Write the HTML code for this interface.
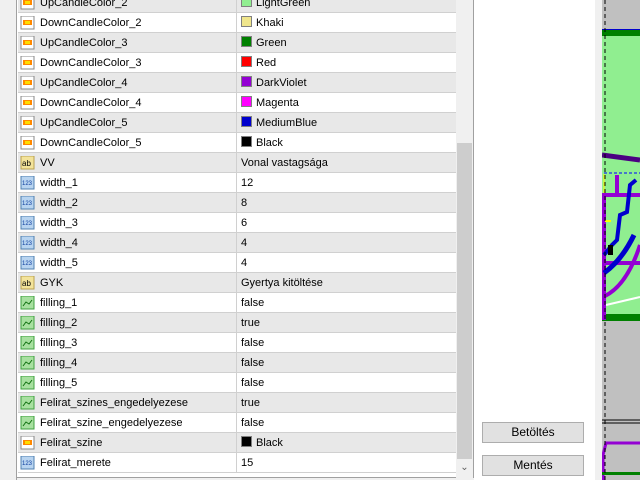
<!DOCTYPE html>
<html><head><meta charset="utf-8"><style>
*{margin:0;padding:0;box-sizing:border-box}
body{width:640px;height:480px;overflow:hidden;background:#f0f0f0;font-family:"Liberation Sans",sans-serif;font-size:11px;color:#000;position:relative}
#left{position:absolute;left:0;top:0;width:17px;height:480px;background:#f0f0f0;border-right:1px solid #a0a0a0}
#grid{position:absolute;left:17px;top:0;width:457px;height:478px;background:#fff;border:1px solid #a0a0a0;border-top:none;border-left:none;overflow:hidden}
.row{position:absolute;left:1px;width:438px;height:20px;border-bottom:1px solid #d0d0d0}
.g{background:#e8e8e8}.w{background:#fff}
.ic{position:absolute;left:2px;top:3px;width:15px;height:14px}
.n{position:absolute;left:22px;top:0;line-height:20px;white-space:nowrap}
.v{position:absolute;left:218px;top:0;height:19px;border-left:1px solid #d0d0d0;padding-left:4px;line-height:20px;white-space:nowrap;width:220px}
.sw{display:inline-block;width:11px;height:11px;border:1px solid #808080;vertical-align:-1px;margin-right:4px}
#sb{position:absolute;left:456px;top:0;width:17px;height:478px;background:#f0f0f0}
#thumb{position:absolute;left:1px;top:143px;width:15px;height:316px;background:#cdcdcd}
#arr{position:absolute;left:458px;top:462px;width:13px;height:12px;color:#606060;font-size:10px;text-align:center}
#rp{position:absolute;left:474px;top:0;width:121px;height:480px;background:#fff}
.btn{position:absolute;left:482px;width:102px;height:21px;background:#e1e1e1;border:1px solid #adadad;text-align:center;line-height:19px;font-size:12px}
#ch{position:absolute;left:602px;top:0;width:38px;height:480px;background:#c0c0c0}
</style></head><body>
<div id="left"></div>
<div id="grid">
<div class="row g" style="top:-7px"><svg class="ic"><rect x="1" y="0" width="13" height="13" fill="#fff" stroke="#888"/><rect x="3" y="4" width="9" height="5" fill="#f80"/><rect x="5" y="5" width="5" height="3" fill="#fd0"/></svg><span class="n">UpCandleColor_2</span><span class="v"><span class="sw" style="background:#90ee90"></span>LightGreen</span></div>
<div class="row w" style="top:13px"><svg class="ic"><rect x="1" y="0" width="13" height="13" fill="#fff" stroke="#888"/><rect x="3" y="4" width="9" height="5" fill="#f80"/><rect x="5" y="5" width="5" height="3" fill="#fd0"/></svg><span class="n">DownCandleColor_2</span><span class="v"><span class="sw" style="background:#f0e68c"></span>Khaki</span></div>
<div class="row g" style="top:33px"><svg class="ic"><rect x="1" y="0" width="13" height="13" fill="#fff" stroke="#888"/><rect x="3" y="4" width="9" height="5" fill="#f80"/><rect x="5" y="5" width="5" height="3" fill="#fd0"/></svg><span class="n">UpCandleColor_3</span><span class="v"><span class="sw" style="background:#008000"></span>Green</span></div>
<div class="row w" style="top:53px"><svg class="ic"><rect x="1" y="0" width="13" height="13" fill="#fff" stroke="#888"/><rect x="3" y="4" width="9" height="5" fill="#f80"/><rect x="5" y="5" width="5" height="3" fill="#fd0"/></svg><span class="n">DownCandleColor_3</span><span class="v"><span class="sw" style="background:#f00"></span>Red</span></div>
<div class="row g" style="top:73px"><svg class="ic"><rect x="1" y="0" width="13" height="13" fill="#fff" stroke="#888"/><rect x="3" y="4" width="9" height="5" fill="#f80"/><rect x="5" y="5" width="5" height="3" fill="#fd0"/></svg><span class="n">UpCandleColor_4</span><span class="v"><span class="sw" style="background:#9400d3"></span>DarkViolet</span></div>
<div class="row w" style="top:93px"><svg class="ic"><rect x="1" y="0" width="13" height="13" fill="#fff" stroke="#888"/><rect x="3" y="4" width="9" height="5" fill="#f80"/><rect x="5" y="5" width="5" height="3" fill="#fd0"/></svg><span class="n">DownCandleColor_4</span><span class="v"><span class="sw" style="background:#f0f"></span>Magenta</span></div>
<div class="row g" style="top:113px"><svg class="ic"><rect x="1" y="0" width="13" height="13" fill="#fff" stroke="#888"/><rect x="3" y="4" width="9" height="5" fill="#f80"/><rect x="5" y="5" width="5" height="3" fill="#fd0"/></svg><span class="n">UpCandleColor_5</span><span class="v"><span class="sw" style="background:#0000cd"></span>MediumBlue</span></div>
<div class="row w" style="top:133px"><svg class="ic"><rect x="1" y="0" width="13" height="13" fill="#fff" stroke="#888"/><rect x="3" y="4" width="9" height="5" fill="#f80"/><rect x="5" y="5" width="5" height="3" fill="#fd0"/></svg><span class="n">DownCandleColor_5</span><span class="v"><span class="sw" style="background:#000"></span>Black</span></div>
<div class="row g" style="top:153px"><svg class="ic"><rect x="1" y="0" width="13" height="13" fill="#f3e39a" stroke="#b8a050"/><text x="2" y="10" font-size="8" font-family="Liberation Sans">ab</text></svg><span class="n">VV</span><span class="v">Vonal vastagsága</span></div>
<div class="row w" style="top:173px"><svg class="ic"><rect x="1" y="0" width="13" height="13" fill="#b8d4f0" stroke="#5080b0"/><text x="2" y="9" font-size="6" fill="#1040a0" font-family="Liberation Sans">123</text></svg><span class="n">width_1</span><span class="v">12</span></div>
<div class="row g" style="top:193px"><svg class="ic"><rect x="1" y="0" width="13" height="13" fill="#b8d4f0" stroke="#5080b0"/><text x="2" y="9" font-size="6" fill="#1040a0" font-family="Liberation Sans">123</text></svg><span class="n">width_2</span><span class="v">8</span></div>
<div class="row w" style="top:213px"><svg class="ic"><rect x="1" y="0" width="13" height="13" fill="#b8d4f0" stroke="#5080b0"/><text x="2" y="9" font-size="6" fill="#1040a0" font-family="Liberation Sans">123</text></svg><span class="n">width_3</span><span class="v">6</span></div>
<div class="row g" style="top:233px"><svg class="ic"><rect x="1" y="0" width="13" height="13" fill="#b8d4f0" stroke="#5080b0"/><text x="2" y="9" font-size="6" fill="#1040a0" font-family="Liberation Sans">123</text></svg><span class="n">width_4</span><span class="v">4</span></div>
<div class="row w" style="top:253px"><svg class="ic"><rect x="1" y="0" width="13" height="13" fill="#b8d4f0" stroke="#5080b0"/><text x="2" y="9" font-size="6" fill="#1040a0" font-family="Liberation Sans">123</text></svg><span class="n">width_5</span><span class="v">4</span></div>
<div class="row g" style="top:273px"><svg class="ic"><rect x="1" y="0" width="13" height="13" fill="#f3e39a" stroke="#b8a050"/><text x="2" y="10" font-size="8" font-family="Liberation Sans">ab</text></svg><span class="n">GYK</span><span class="v">Gyertya kitöltése</span></div>
<div class="row w" style="top:293px"><svg class="ic"><rect x="1" y="0" width="13" height="13" fill="#a8e0a0" stroke="#40a040"/><path d="M3 10 L6 6 L9 8 L12 4" stroke="#107010" fill="none"/></svg><span class="n">filling_1</span><span class="v">false</span></div>
<div class="row g" style="top:313px"><svg class="ic"><rect x="1" y="0" width="13" height="13" fill="#a8e0a0" stroke="#40a040"/><path d="M3 10 L6 6 L9 8 L12 4" stroke="#107010" fill="none"/></svg><span class="n">filling_2</span><span class="v">true</span></div>
<div class="row w" style="top:333px"><svg class="ic"><rect x="1" y="0" width="13" height="13" fill="#a8e0a0" stroke="#40a040"/><path d="M3 10 L6 6 L9 8 L12 4" stroke="#107010" fill="none"/></svg><span class="n">filling_3</span><span class="v">false</span></div>
<div class="row g" style="top:353px"><svg class="ic"><rect x="1" y="0" width="13" height="13" fill="#a8e0a0" stroke="#40a040"/><path d="M3 10 L6 6 L9 8 L12 4" stroke="#107010" fill="none"/></svg><span class="n">filling_4</span><span class="v">false</span></div>
<div class="row w" style="top:373px"><svg class="ic"><rect x="1" y="0" width="13" height="13" fill="#a8e0a0" stroke="#40a040"/><path d="M3 10 L6 6 L9 8 L12 4" stroke="#107010" fill="none"/></svg><span class="n">filling_5</span><span class="v">false</span></div>
<div class="row g" style="top:393px"><svg class="ic"><rect x="1" y="0" width="13" height="13" fill="#a8e0a0" stroke="#40a040"/><path d="M3 10 L6 6 L9 8 L12 4" stroke="#107010" fill="none"/></svg><span class="n">Felirat_szines_engedelyezese</span><span class="v">true</span></div>
<div class="row w" style="top:413px"><svg class="ic"><rect x="1" y="0" width="13" height="13" fill="#a8e0a0" stroke="#40a040"/><path d="M3 10 L6 6 L9 8 L12 4" stroke="#107010" fill="none"/></svg><span class="n">Felirat_szine_engedelyezese</span><span class="v">false</span></div>
<div class="row g" style="top:433px"><svg class="ic"><rect x="1" y="0" width="13" height="13" fill="#fff" stroke="#888"/><rect x="3" y="4" width="9" height="5" fill="#f80"/><rect x="5" y="5" width="5" height="3" fill="#fd0"/></svg><span class="n">Felirat_szine</span><span class="v"><span class="sw" style="background:#000"></span>Black</span></div>
<div class="row w" style="top:453px"><svg class="ic"><rect x="1" y="0" width="13" height="13" fill="#b8d4f0" stroke="#5080b0"/><text x="2" y="9" font-size="6" fill="#1040a0" font-family="Liberation Sans">123</text></svg><span class="n">Felirat_merete</span><span class="v">15</span></div>
</div>
<div id="sb" style="left:456px"><div id="thumb"></div></div>
<div id="arr">⌄</div>
<div id="rp"></div>
<div class="btn" style="top:422px">Betöltés</div>
<div class="btn" style="top:455px">Mentés</div>
<div id="ch">
<svg width="38" height="480" style="position:absolute;left:0;top:0">
<rect x="0" y="29" width="38" height="292" fill="#90ee90"/>
<rect x="0" y="29" width="38" height="1" fill="#0000cd"/>
<rect x="0" y="30" width="38" height="6" fill="#008000"/>
<rect x="0" y="314" width="38" height="7" fill="#008000"/>
<path d="M0 155 L38 160" stroke="#4b0082" stroke-width="5"/>
<path d="M2 173 H38" stroke="#00f" stroke-dasharray="3,2"/>
<path d="M2 174 V265" stroke="#ff0"/>
<path d="M2 320 V195 H38" stroke="#9400d3" stroke-width="4" fill="none"/>
<path d="M15 175 V195" stroke="#9400d3" stroke-width="4"/>
<path d="M0 263 H38" stroke="#9400d3" stroke-width="4"/>
<path d="M2 273 Q20 260 32 235" stroke="#0000cd" stroke-width="5" fill="none"/>
<path d="M2 255 L10 245 L15 240 L18 215 L25 212 L28 185 L34 180" stroke="#0000cd" stroke-width="4" fill="none"/>
<path d="M3 296 Q25 285 38 245" stroke="#9400d3" stroke-width="4" fill="none"/>
<path d="M4 305 L38 297" stroke="#fff" stroke-width="2"/>
<rect x="3" y="220" width="6" height="2" fill="#ff0"/>
<rect x="6" y="245" width="5" height="10" fill="#000"/>
<path d="M0 420 H38 M0 423 H38" stroke="#000"/>
<path d="M1 480 V455 L4 443 H38" stroke="#9400d3" stroke-width="3" fill="none"/>
<rect x="0" y="472" width="38" height="3" fill="#008000"/>
<path d="M3 0 V480" stroke="#000" stroke-dasharray="4,3"/>
</svg>
</div>
<div style="position:absolute;left:595px;top:0;width:7px;height:480px;background:#f0f0f0"></div>
</body></html>
